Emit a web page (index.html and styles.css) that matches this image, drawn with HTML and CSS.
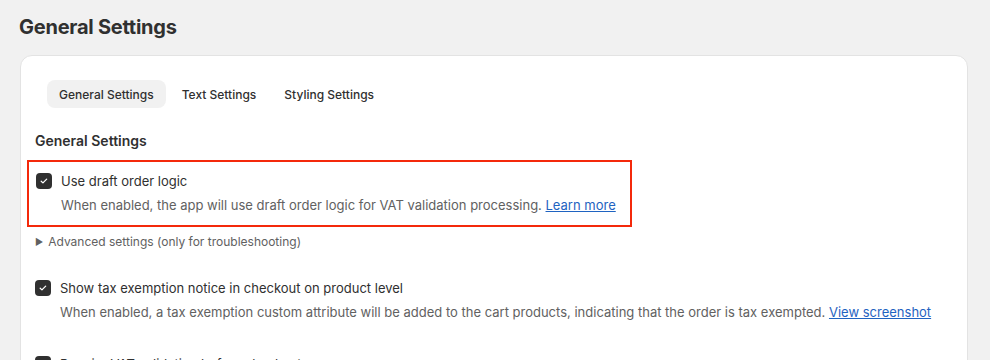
FILE: index.html
```html
<!DOCTYPE html>
<html lang="en">

<head>
    <meta charset="UTF-8">
    <meta name="viewport" content="width=device-width, initial-scale=1.0">
    <title>General Settings</title>
    <link rel="stylesheet" href="styles.css">
</head>

<body>
    <div class="page">
        <h1 class="page-title">General Settings</h1>

        <div class="card">
            <!-- Tabs -->
            <div class="tabs">
                <button class="tab active">General Settings</button>
                <button class="tab">Text Settings</button>
                <button class="tab">Styling Settings</button>
            </div>

            <h2 class="section-title">General Settings</h2>

            <div class="highlight">
                <label class="option">
                    <span class="checkbox">
                        <svg viewBox="0 0 16 16" width="10" height="10"><path d="M3.5 8.3l2.8 2.7 6-6" fill="none" stroke="#fff" stroke-width="2" stroke-linecap="round" stroke-linejoin="round"/></svg>
                    </span>
                    <span class="option-label">Use draft order logic</span>
                </label>
                <p class="option-help">When enabled, the app will use draft order logic for VAT validation processing. <a href="#">Learn more</a></p>
            </div>

            <div class="advanced">
                <span class="caret">&#9654;</span>
                <span>Advanced settings (only for troubleshooting)</span>
            </div>

            <div class="setting">
                <label class="option">
                    <span class="checkbox">
                        <svg viewBox="0 0 16 16" width="10" height="10"><path d="M3.5 8.3l2.8 2.7 6-6" fill="none" stroke="#fff" stroke-width="2" stroke-linecap="round" stroke-linejoin="round"/></svg>
                    </span>
                    <span class="option-label">Show tax exemption notice in checkout on product level</span>
                </label>
                <p class="option-help">When enabled, a tax exemption custom attribute will be added to the cart products, indicating that the order is tax exempted. <a href="#">View screenshot</a></p>
            </div>

            <div class="setting">
                <label class="option">
                    <span class="checkbox">
                        <svg viewBox="0 0 16 16" width="10" height="10"><path d="M3.5 8.3l2.8 2.7 6-6" fill="none" stroke="#fff" stroke-width="2" stroke-linecap="round" stroke-linejoin="round"/></svg>
                    </span>
                    <span class="option-label">Require VAT validation before checkout</span>
                </label>
            </div>
        </div>
    </div>
</body>

</html>
```

FILE: styles.css
```css
/* General */
* {
    box-sizing: border-box;
    margin: 0;
    padding: 0;
}

body {
    font-family: Inter, 'Noto Sans', sans-serif;
    background-color: #f1f1f1;
    color: #303030;
    font-size: 13px;
    line-height: 20px;
}

.page {
    padding: 15px 22px 0 20px;
}

.page-title {
    font-size: 20px;
    font-weight: 700;
    line-height: 24px;
    letter-spacing: -0.25px;
    margin-left: -1px;
    margin-bottom: 16px;
    color: #303030;
}

/* Card */
.card {
    background-color: #fff;
    border: 1px solid #e3e3e3;
    border-radius: 12px;
    padding: 24px 15px 40px 14px;
}

/* Tabs */
.tabs {
    display: flex;
    gap: 4px;
    margin-left: 12px;
}

.tab {
    height: 28px;
    padding: 0 12px;
    border: none;
    border-radius: 8px;
    background: transparent;
    font-family: inherit;
    font-size: 12px;
    font-weight: 500;
    color: #303030;
    cursor: pointer;
}

.tab.active {
    background-color: #f1f1f1;
}

.section-title {
    font-size: 14px;
    font-weight: 600;
    line-height: 20px;
    margin-top: 23px;
    margin-bottom: 9px;
}

/* Options */
.option {
    display: flex;
    align-items: center;
    gap: 9px;
    cursor: pointer;
}

.checkbox {
    width: 16px;
    height: 16px;
    border-radius: 4px;
    background-color: #303030;
    display: flex;
    align-items: center;
    justify-content: center;
    flex-shrink: 0;
}

.option-help {
    color: #616161;
    margin-top: 4px;
    padding-left: 25px;
}

.option-help a {
    color: #1f63c1;
}

.highlight {
    display: inline-block;
    border: 2px solid #f4290b;
    margin-left: -8px;
    padding: 9px 14px 10px 7px;
}

.advanced {
    display: flex;
    align-items: center;
    gap: 5px;
    font-size: 12px;
    color: #616161;
    margin-top: 5px;
}

.caret {
    font-size: 9px;
    color: #616161;
}

.setting {
    margin-top: 26px;
}

.setting + .setting {
    margin-top: 32px;
}
```
